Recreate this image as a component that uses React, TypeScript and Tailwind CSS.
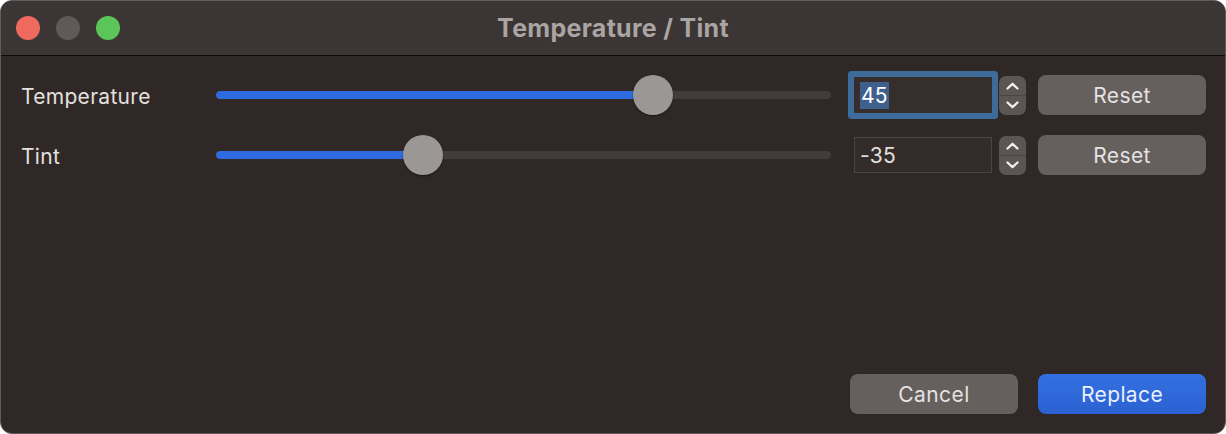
import React from "react";

const font = { fontFamily: "Inter, 'Noto Sans', sans-serif" };

function Chevron({ up }: { up?: boolean }) {
  return (
    <svg width="13" height="8" viewBox="0 0 13 8" fill="none">
      <path
        d={up ? "M1.5 6.5 L6.5 1.8 L11.5 6.5" : "M1.5 1.5 L6.5 6.2 L11.5 1.5"}
        stroke="#f2eeed"
        strokeWidth="2.3"
        strokeLinecap="round"
        strokeLinejoin="round"
      />
    </svg>
  );
}

function Stepper() {
  return (
    <div className="w-[27px] h-[39px] rounded-[7px] bg-[#5b5554] flex flex-col items-center">
      <div className="flex-1 flex items-center justify-center pt-[1px]">
        <Chevron up />
      </div>
      <div className="w-full h-px bg-[#4a4443]" />
      <div className="flex-1 flex items-center justify-center pb-[1px]">
        <Chevron />
      </div>
    </div>
  );
}

function Slider({ value }: { value: number }) {
  const pct = (value + 100) / 200;
  const center = 20 + pct * (615 - 40);
  return (
    <div className="relative w-[615px] h-[40px] flex items-center">
      <div className="w-full h-[8px] rounded-full bg-[#433c3b] overflow-hidden">
        <div className="h-full bg-[#2e6be0] rounded-full" style={{ width: center }} />
      </div>
      <div
        className="absolute top-0 w-[40px] h-[40px] rounded-full bg-[#9b9796] shadow-[0_1px_2px_rgba(0,0,0,0.45)]"
        style={{ left: center - 20 }}
      />
    </div>
  );
}

function Row({ label, value, focused }: { label: string; value: number; focused?: boolean }) {
  return (
    <div className="flex items-center h-[40px]">
      <div className="w-[195px] text-[21px] tracking-[0.3px] text-[#e4e0df] pt-[3px]">{label}</div>
      <Slider value={value} />
      <div className="ml-[23px] w-[138px] h-[36px]">
        {focused ? (
          <div className="w-full h-full bg-[#352e2d] rounded-[1px] shadow-[0_0_0_6px_#3d6c9b] flex items-center pl-[6px] pt-[1px]">
            <span className="text-[21px] leading-[27px] text-white bg-[#3f5f8d] px-[1px] tracking-[0.3px]">{value}</span>
          </div>
        ) : (
          <div className="w-full h-full bg-[#332c2b] border border-[#4b4443] flex items-center pl-[5px] pt-[1px]">
            <span className="text-[21px] text-[#e4e0df] tracking-[0.3px]">{value}</span>
          </div>
        )}
      </div>
      <div className="ml-[7px]">
        <Stepper />
      </div>
      <button className="ml-[12px] w-[168px] h-[40px] rounded-[8px] bg-[#655f5e] text-[21px] tracking-[0.4px] text-[#e6e2e1] pt-[2px]">
        Reset
      </button>
    </div>
  );
}

export default function App() {
  return (
    <div className="w-[1226px] h-[434px] bg-white" style={font}>
      <div className="w-full h-full rounded-[12px] border border-[#615c5b] overflow-hidden flex flex-col bg-[#2f2827]">
        <div className="h-[55px] bg-[#3b3635] grid grid-cols-[1fr_auto_1fr] items-center border-b border-[#0e0b0b]">
          <div className="flex items-center gap-[16px] pl-[15px]">
            <div className="w-[24px] h-[24px] rounded-full bg-[#ee6a5f]" />
            <div className="w-[24px] h-[24px] rounded-full bg-[#5f5a59]" />
            <div className="w-[24px] h-[24px] rounded-full bg-[#5bc55a]" />
          </div>
          <div className="text-[25px] font-bold tracking-[0.3px] text-[#aaa4a3] pt-[1px]">Temperature / Tint</div>
          <div />
        </div>
        <div className="flex-1 flex flex-col pl-[20px] pr-[19px] pt-[19px] pb-[19px]">
          <div className="flex flex-col gap-[20px]">
            <Row label="Temperature" value={45} focused />
            <Row label="Tint" value={-35} />
          </div>
          <div className="mt-auto flex justify-end gap-[20px]">
            <button className="w-[168px] h-[40px] rounded-[8px] bg-[#655f5e] text-[21px] tracking-[0.4px] text-[#e6e2e1] pt-[2px]">
              Cancel
            </button>
            <button className="w-[168px] h-[40px] rounded-[8px] bg-gradient-to-b from-[#336fe0] to-[#2b62d3] text-[21px] tracking-[0.4px] text-[#eaf0fc] pt-[2px]">
              Replace
            </button>
          </div>
        </div>
      </div>
    </div>
  );
}
